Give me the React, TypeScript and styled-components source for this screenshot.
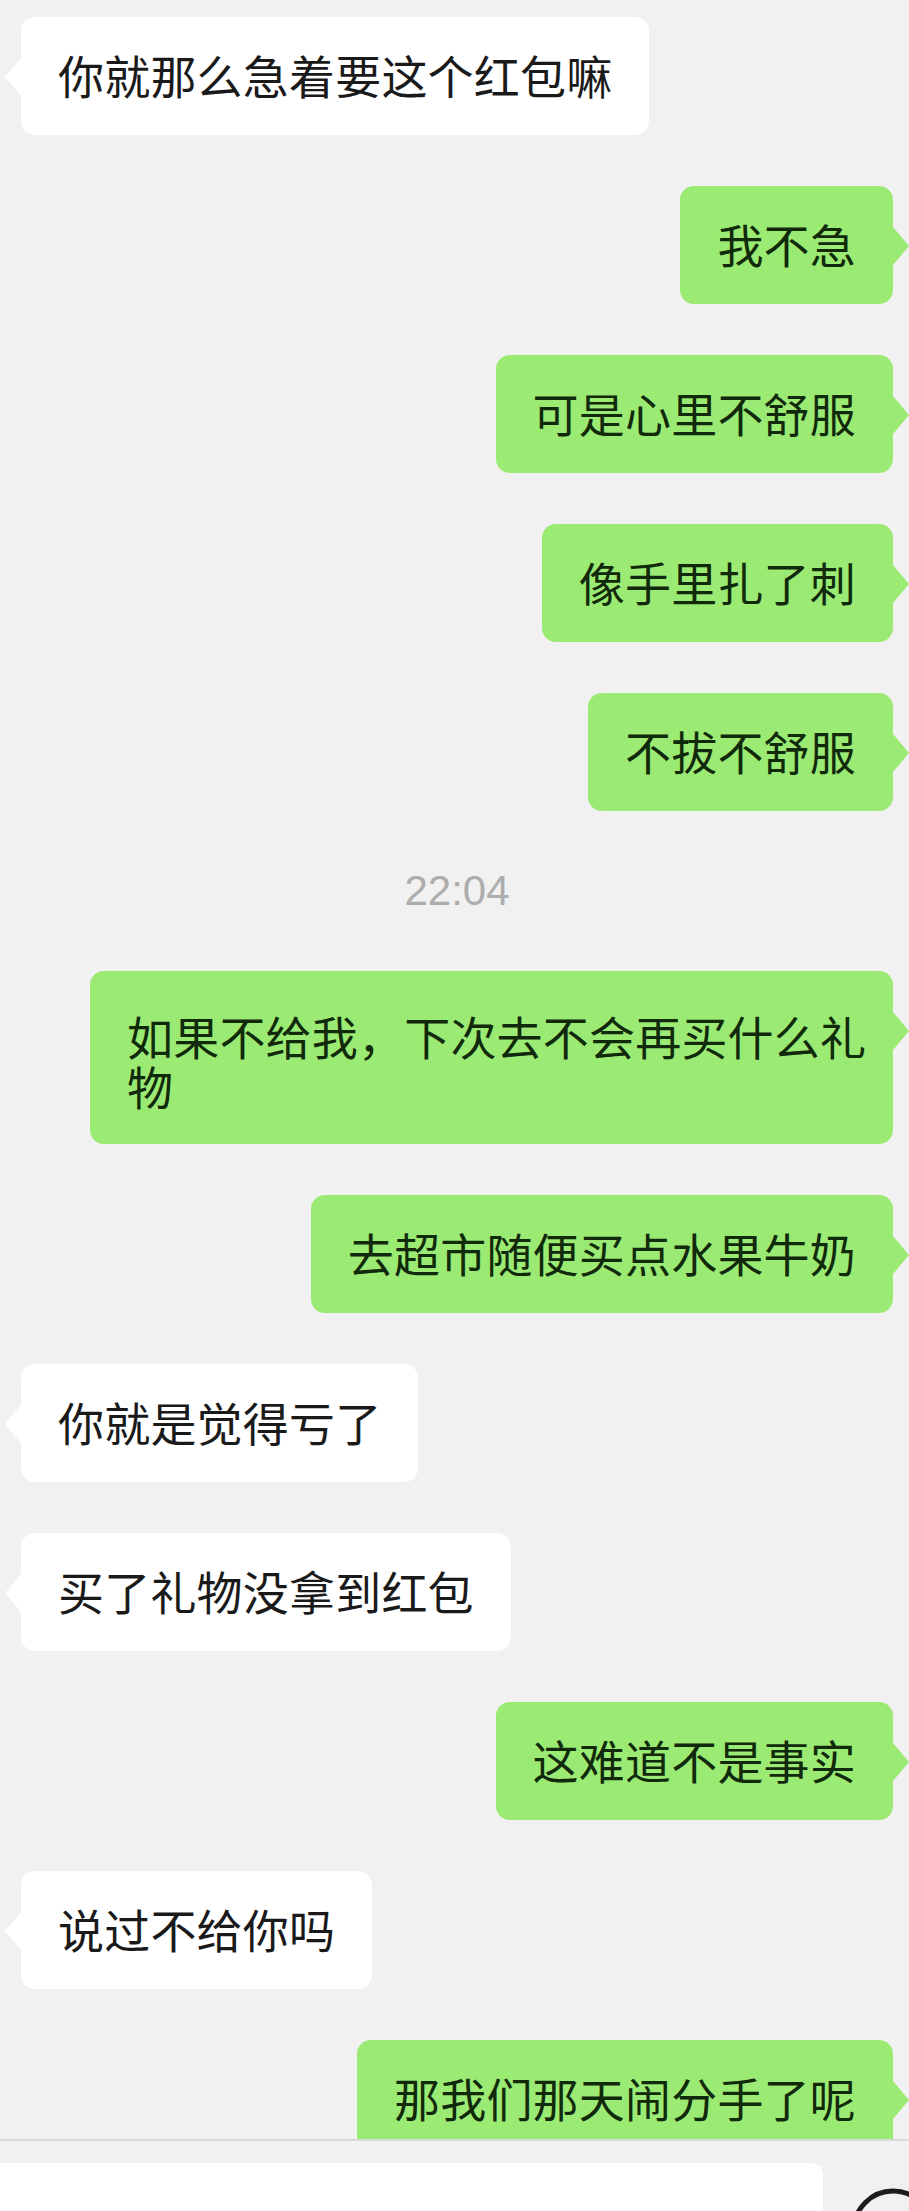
import React from "react";
import styled, { createGlobalStyle } from "styled-components";

const Reset = createGlobalStyle`
  html, body { margin: 0; padding: 0; background: #f1f1f1; }
  * { box-sizing: border-box; }
`;

const Screen = styled.div`
  width: 909px;
  height: 2211px;
  overflow: hidden;
  display: flex;
  flex-direction: column;
  background: #f1f1f1;
  font-family: "Noto Sans CJK SC", "Liberation Sans", sans-serif;
`;

const Thread = styled.main`
  height: 2139px;
  flex: none;
  overflow: hidden;
  display: flex;
  flex-direction: column;
  gap: 51px;
  padding: 17px 16px 0 21px;
`;

const Row = styled.div<{ $mine?: boolean }>`
  display: flex;
  flex: none;
  justify-content: ${(p) => (p.$mine ? "flex-end" : "flex-start")};
`;

const Bubble = styled.div<{ $mine?: boolean; $wrapped?: boolean }>`
  position: relative;
  flex: none;
  max-width: 803px;
  padding: ${(p) => (p.$wrapped ? "39px 25px 34px 37px" : "32px 37px 36px")};
  border-radius: 14px;
  background: ${(p) => (p.$mine ? "#9bea74" : "#ffffff")};
  color: ${(p) => (p.$mine ? "#102a0b" : "#1a1a1a")};
  font-size: 46px;
  letter-spacing: 0.2px;
  line-height: 50px;

  &::after {
    content: "";
    position: absolute;
    top: 41px;
    ${(p) => (p.$mine ? "right: -16px;" : "left: -16px;")}
    width: 16px;
    height: 38px;
    background: inherit;
    clip-path: ${(p) =>
      p.$mine
        ? "polygon(0 0, 100% 50%, 0 100%)"
        : "polygon(100% 0, 0 50%, 100% 100%)"};
  }
`;

const TimeStamp = styled.div`
  flex: none;
  height: 58px;
  display: flex;
  align-items: center;
  justify-content: center;
  color: #adadad;
  font-family: "Liberation Sans", sans-serif;
  font-size: 42px;
`;

const Composer = styled.footer`
  flex: none;
  display: flex;
  align-items: flex-start;
  height: 72px;
  overflow: hidden;
  border-top: 2px solid #d9d9d9;
  background: #f1f1f1;
  padding-top: 22px;
`;

const InputBox = styled.div`
  flex: none;
  width: 843px;
  height: 90px;
  margin-left: -20px;
  border-radius: 12px;
  background: #ffffff;
`;

const EmojiIcon = styled.svg`
  flex: none;
  width: 84px;
  height: 84px;
  margin-left: 28px;
  margin-top: 25px;
`;

type Message = { text: string; mine?: boolean; wrapped?: boolean } | { time: string };

const messages: Message[] = [
  { text: "你就那么急着要这个红包嘛" },
  { text: "我不急", mine: true },
  { text: "可是心里不舒服", mine: true },
  { text: "像手里扎了刺", mine: true },
  { text: "不拔不舒服", mine: true },
  { time: "22:04" },
  { text: "如果不给我，下次去不会再买什么礼物", mine: true, wrapped: true },
  { text: "去超市随便买点水果牛奶", mine: true },
  { text: "你就是觉得亏了" },
  { text: "买了礼物没拿到红包" },
  { text: "这难道不是事实", mine: true },
  { text: "说过不给你吗" },
  { text: "那我们那天闹分手了呢", mine: true },
];

export default function App() {
  return (
    <Screen>
      <Reset />
      <Thread>
        {messages.map((m, i) =>
          "time" in m ? (
            <TimeStamp key={i}>{m.time}</TimeStamp>
          ) : (
            <Row key={i} $mine={m.mine}>
              <Bubble $mine={m.mine} $wrapped={m.wrapped}>
                {m.text}
              </Bubble>
            </Row>
          )
        )}
      </Thread>
      <Composer>
        <InputBox />
        <EmojiIcon viewBox="0 0 84 84" fill="none">
          <circle cx="42" cy="42" r="39" stroke="#1c1c1c" strokeWidth="5" />
          <circle cx="29" cy="32" r="4.5" fill="#1c1c1c" />
          <circle cx="55" cy="32" r="4.5" fill="#1c1c1c" />
          <path d="M24 52c5 9 12 13 18 13s13-4 18-13" stroke="#1c1c1c" strokeWidth="4" strokeLinecap="round" />
        </EmojiIcon>
      </Composer>
    </Screen>
  );
}
